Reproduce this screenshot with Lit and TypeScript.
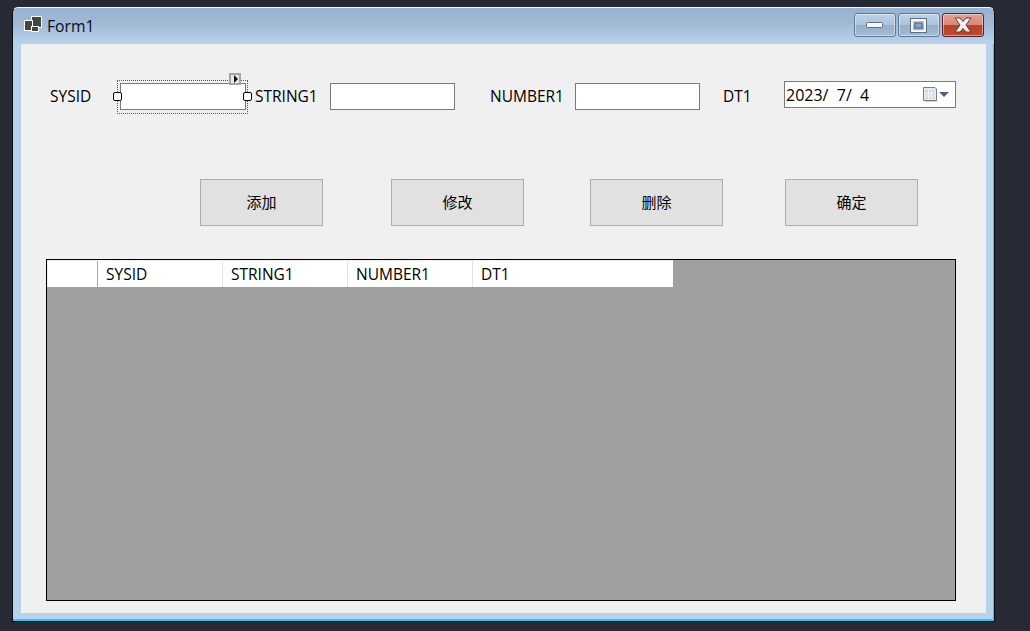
import { LitElement, html, css, svg } from "lit";
import { customElement } from "lit/decorators.js";

const winIcon = svg`<svg width="18" height="16" viewBox="0 0 18 16" class="appicon">
<rect x="7.5" y="0.5" width="10" height="11" fill="#444" stroke="#fff"/>
<rect x="0.5" y="4.5" width="8" height="10" fill="#444" stroke="#fff"/>
<rect x="7.5" y="10.5" width="7" height="5" fill="#444" stroke="#fff"/>
</svg>`;

const calIcon = svg`<svg width="15" height="16" viewBox="0 0 15 16" class="cal">
<path d="M.5.5h11.500l1.500 1.500v11.500H.5z" fill="#e8eaf0" stroke="#7c7c7c"/>
<path d="M2.500 3h9v9h-9z" fill="#d0d6e2"/>
<path d="M2.500 6h9M2.500 9h9M5.500 3v9M8.500 3v9" stroke="#f4f5f8" fill="none"/>
<path d="M2 14.500h12.500" stroke="#cfcfcf"/>
</svg>`;

@customElement("app-root")
export class AppRoot extends LitElement {
  static styles = css`
    :host {
      display: block;
      width: 1030px;
      height: 631px;
      overflow: hidden;
      background: #272935;
      font-family: "Open Sans", "Noto Sans", "Noto Sans CJK SC", sans-serif;
      font-size: 15.5px;
      color: #000;
      padding-top: 7px;
      padding-left: 12px;
      box-sizing: border-box;
    }
    .window {
      width: 983px;
      height: 615px;
      box-sizing: border-box;
      border-left: 1px solid #0b0c12;
      border-right: 1px solid #0b0c12;
      border-bottom: 1px solid #0b0c12;
      border-top: 1px solid #f4f8fc;
      border-radius: 6px 6px 0 0;
      background: #b9d2ec;
      display: flex;
      flex-direction: column;
      box-shadow: inset 0 -2px 0 #25cdf2, inset -1px 0 0 #25cdf2;
    }
    .titlebar {
      height: 36px;
      flex: none;
      display: flex;
      align-items: center;
      padding: 0 10px 0 11px;
      border-radius: 5px 5px 0 0;
      background: linear-gradient(#97b2d0, #a1bad6 45%, #bad3ec);
    }
    .appicon { margin-right: 5px; margin-top: -4px; }
    .title { font-size: 15.7px; color: #0a0a14; margin-top: 0; }
    .caption { margin-left: auto; display: flex; gap: 2px; margin-top: -2px; }
    .cap {
      width: 42px;
      height: 24px;
      box-sizing: border-box;
      border: 1px solid #5d7893;
      border-radius: 3px;
      box-shadow: inset 0 0 0 1px rgba(255, 255, 255, 0.45);
      background: linear-gradient(#bdd0e6 0, #adc4de 48%, #93aecb 50%, #a3bcd7 100%);
      display: flex;
      align-items: center;
      justify-content: center;
    }
    .cap.close {
      border-color: #5a2030;
      background: linear-gradient(#e49f93 0, #d88a7c 48%, #bb4427 50%, #b84a2f 100%);
    }
    .client {
      margin: 0 8px 7px 8px;
      height: 569px;
      background: #f0f0f0;
      flex: none;
      box-sizing: border-box;
      padding: 38px 0 0 25px;
      display: flex;
      flex-direction: column;
    }
    .fields {
      display: flex;
      height: 28px;
      align-items: center;
      position: relative;
    }
    .lbl { line-height: 20px; flex: none; white-space: nowrap; }
    .input {
      height: 27px;
      box-sizing: border-box;
      border: 1px solid #7a7a7a;
      background: #fff;
      flex: none;
      width: 125px;
    }
    .sel { position: relative; width: 126px; margin: 0 9px 0 25px; flex: none; }
    .sel .input { width: 126px; }
    .hatch {
      position: absolute;
      inset: -3px -2px -4px -3px;
      border: 1px dotted #555;
    }
    .handle {
      position: absolute;
      top: 9px;
      width: 7px;
      height: 7px;
      border: 1px solid #000;
      border-radius: 2px;
      background: #fff;
    }
    .handle.l { left: -7px; }
    .handle.r { right: -6px; }
    .tag {
      position: absolute;
      top: -10px;
      right: 5px;
      width: 12px;
      height: 12px;
      box-sizing: border-box;
      background: #e8e8e8;
      border: 2px solid #a6a6a0;
      display: flex;
      align-items: center;
      justify-content: center;
    }
    .tag i {
      display: block;
      width: 0;
      height: 0;
      border-left: 4px solid #111;
      border-top: 4px solid transparent;
      border-bottom: 4px solid transparent;
      margin-left: 1px;
    }
    .date {
      width: 172px;
      height: 27px;
      box-sizing: border-box;
      border: 1px solid #7a7a7a;
      background: #fff;
      flex: none;
      display: flex;
      align-items: center;
      padding-left: 1px;
      margin-left: 33px;
      margin-top: -3px;
      font-size: 16px;
      white-space: pre;
    }
    .cal { margin-left: auto; margin-top: 1px; }
    .arrow {
      width: 0;
      height: 0;
      border-left: 5px solid transparent;
      border-right: 5px solid transparent;
      border-top: 5px solid #4a6184;
      margin: 0 6px 0 1px;
    }
    .buttons {
      display: flex;
      margin: 69px 0 0 154px;
      flex: none;
    }
    .btn {
      height: 47px;
      box-sizing: border-box;
      border: 1px solid #adadad;
      background: #e1e1e1;
      display: flex;
      align-items: center;
      justify-content: center;
      padding-bottom: 3px;
      font-family: "Noto Sans CJK SC", sans-serif;
      font-size: 15px;
      flex: none;
      width: 133px;
    }
    .b1 { width: 123px; margin-right: 68px; }
    .b2 { margin-right: 66px; }
    .b3 { margin-right: 62px; }
    .grid {
      margin-top: 33px;
      width: 910px;
      height: 342px;
      box-sizing: border-box;
      border: 1px solid #000;
      background: #a0a0a0;
      flex: none;
    }
    .head {
      display: flex;
      height: 27px;
      width: 626px;
      background: #fff;
      border-left: 1px solid #f0f0f0;
      border-top: 1px solid #f0f0f0;
      box-sizing: border-box;
    }
    .hc {
      box-sizing: border-box;
      width: 125px;
      padding-left: 8px;
      line-height: 26px;
      border-right: 1px solid #e2e2e2;
      white-space: nowrap;
    }
    .hc.corner { width: 50px; padding: 0; border-right-color: #a8a8a8; }
    .hc.last { width: 200px; border-right: none; }
  `;

  render() {
    return html`
      <div class="window">
        <div class="titlebar">
          ${winIcon}<span class="title">Form1</span>
          <div class="caption">
            <div class="cap">
              <svg width="18" height="7" viewBox="0 0 18 7"><rect x=".5" y=".5" width="16" height="5" rx="1" fill="#f4f6f8" stroke="#5f6f82"/></svg>
            </div>
            <div class="cap">
              <svg width="18" height="15" viewBox="0 0 18 15"><rect x="1.500" y="1.500" width="14" height="12" fill="none" stroke="#5f6f82" stroke-width="3"/><rect x="2" y="2" width="13" height="11" fill="none" stroke="#f4f6f8" stroke-width="2"/><rect x="5" y="5" width="7" height="5" fill="#8ba7c6" stroke="#4d6178"/></svg>
            </div>
            <div class="cap close">
              <svg width="20" height="16" viewBox="0 0 20 16"><path d="M2 1h5l3 3.500L13 1h5l-5 7 5 7h-5l-3-3.500L7 15H2l5-7z" fill="#f2f0f0" stroke="#6b3a38"/></svg>
            </div>
          </div>
        </div>
        <div class="client">
          <div class="fields">
            <span class="lbl" style="width:45px;margin-left:4px">SYSID</span>
            <div class="sel">
              <div class="input"></div>
              <div class="hatch"></div>
              <div class="handle l"></div>
              <div class="handle r"></div>
              <div class="tag"><i></i></div>
            </div>
            <span class="lbl" style="width:75px">STRING1</span>
            <div class="input"></div>
            <span class="lbl" style="margin-left:35px;width:85px">NUMBER1</span>
            <div class="input"></div>
            <span class="lbl" style="margin-left:23px;width:38px">DT1</span>
            <div class="date" style="margin-left:23px">2023/  7/  4${calIcon}<span class="arrow"></span></div>
          </div>
          <div class="buttons">
            <div class="btn b1">添加</div>
            <div class="btn b2">修改</div>
            <div class="btn b3">删除</div>
            <div class="btn">确定</div>
          </div>
          <div class="grid">
            <div class="head">
              <div class="hc corner"></div>
              <div class="hc">SYSID</div>
              <div class="hc">STRING1</div>
              <div class="hc">NUMBER1</div>
              <div class="hc last">DT1</div>
            </div>
          </div>
        </div>
      </div>
    `;
  }
}
